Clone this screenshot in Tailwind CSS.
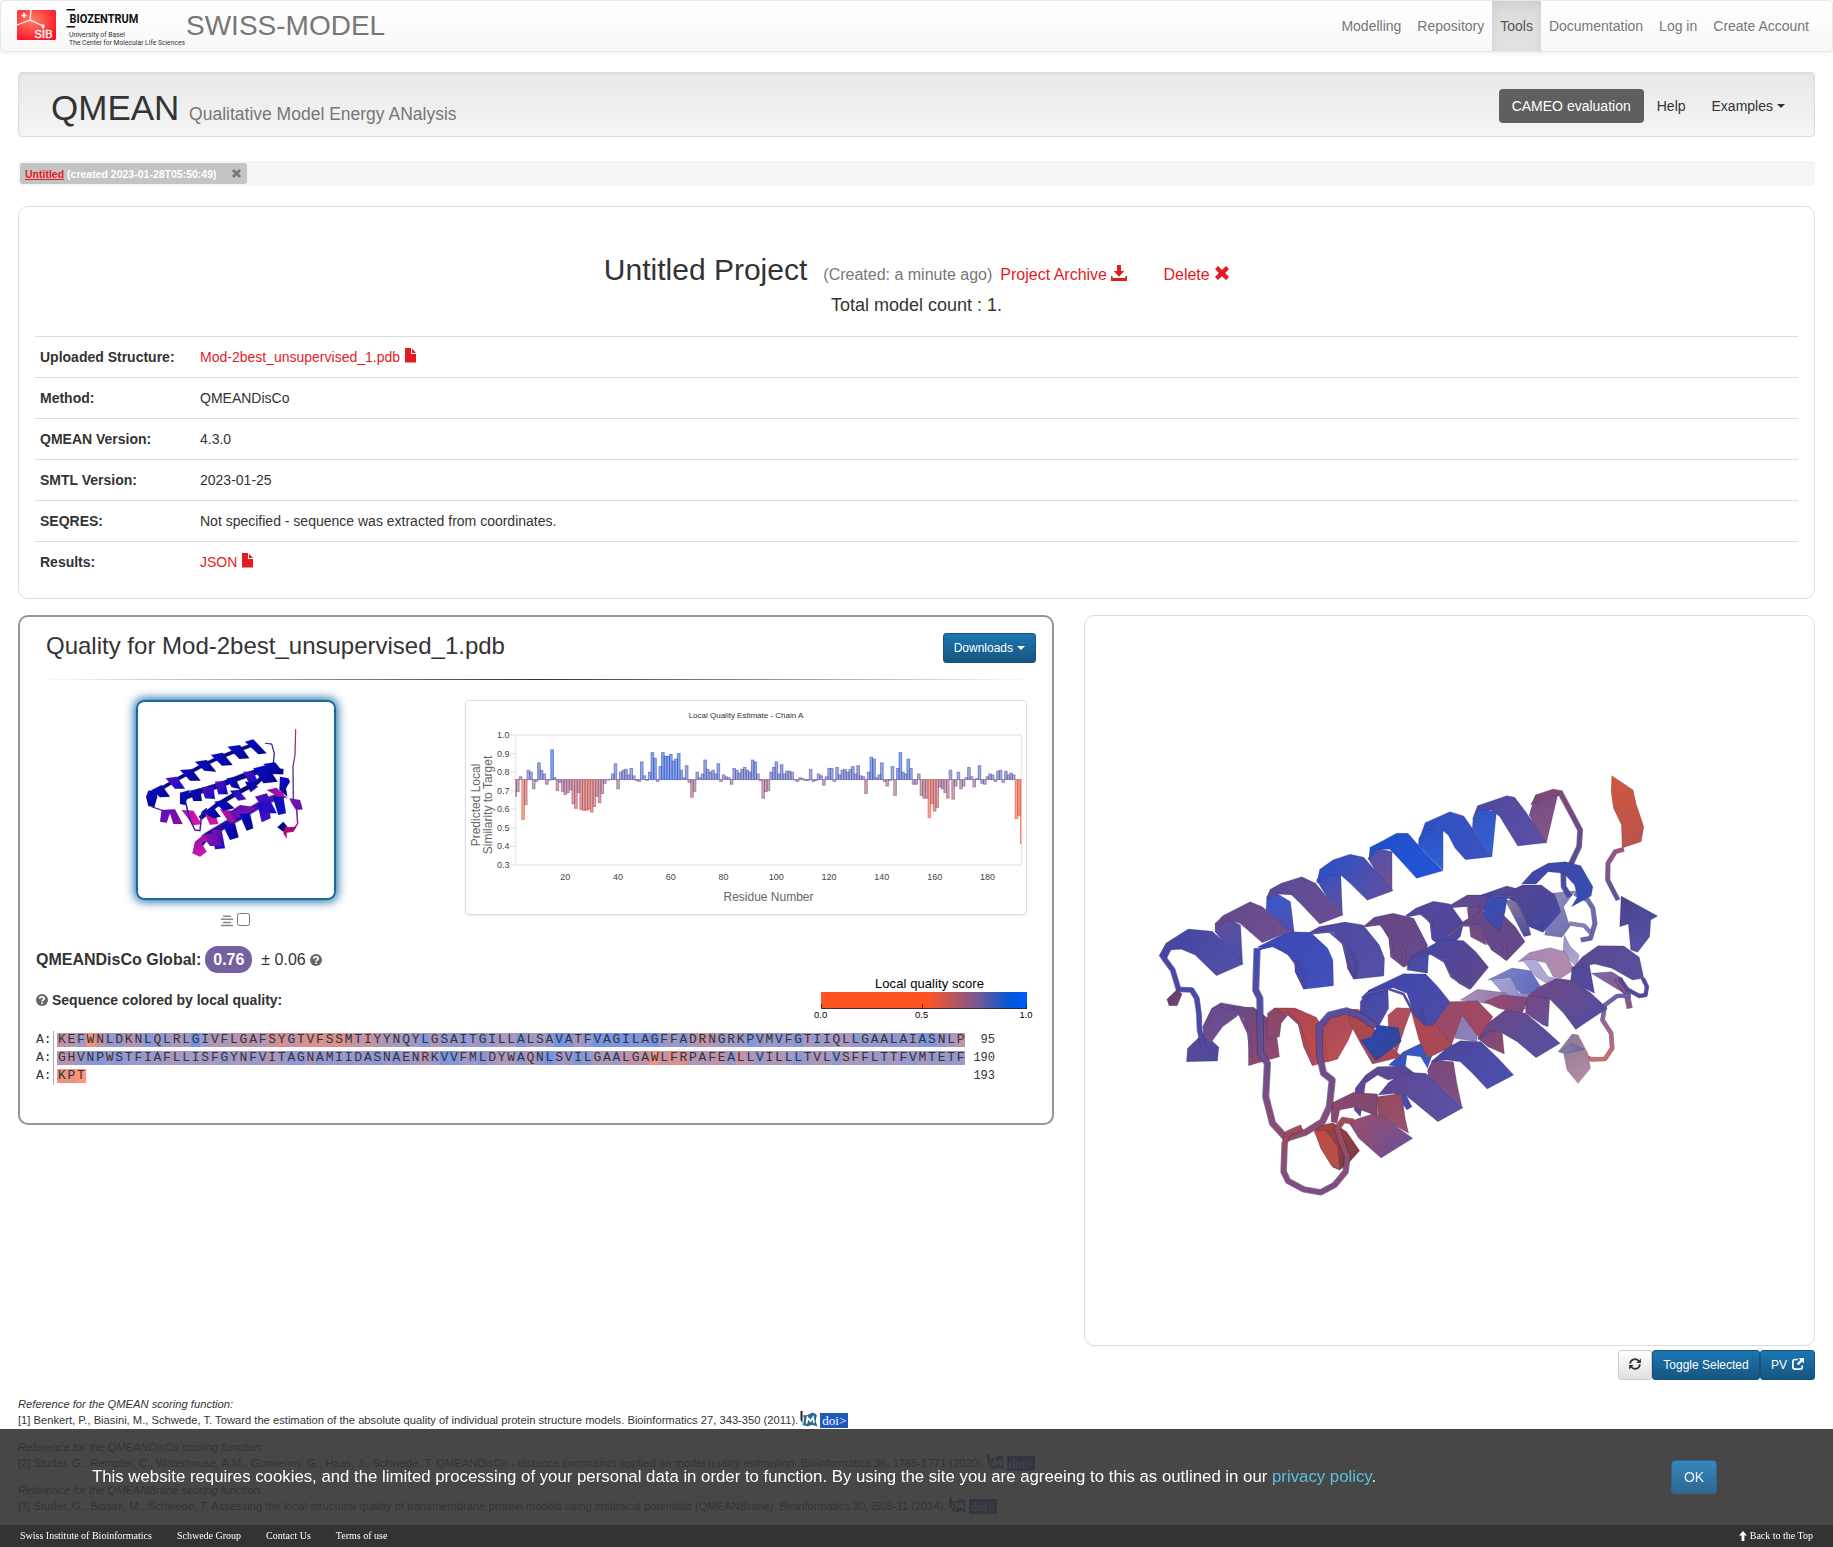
<!DOCTYPE html>
<html lang="en">
<head>
<meta charset="utf-8">
<title>QMEAN - SWISS-MODEL</title>
<script src="https://cdn.jsdelivr.net/npm/@tailwindcss/browser@4"></script>
</head>
<body class="bg-white text-[#333] text-sm leading-5 font-['Liberation_Sans',Arial,sans-serif] h-[1547px] overflow-hidden relative">

<svg class="hidden">
  <symbol id="file" viewBox="0 0 12 15"><path fill="currentColor" d="M0 0H6V6H11V14.5H0ZM7 .6 10.9 5H7Z"/></symbol>
  <symbol id="remove" viewBox="0 0 14 14"><path fill="currentColor" d="M3 0 7 4 11 0 14 3 10.2 7 14 11 11 14 7 10.2 3 14 0 11 3.8 7 0 3Z"/></symbol>
  <symbol id="download" viewBox="0 0 16 16"><path fill="currentColor" d="M6 0H10V6H13.2L8 11.8 2.8 6H6ZM0 11H1.6V13H14.4V11H16V16H0Z"/></symbol>
  <symbol id="question" viewBox="0 0 12 12"><circle cx="6" cy="6" r="6" fill="currentColor"/><path d="M3.7 4.7C3.7 2.2 8.3 2.2 8.3 4.6 8.3 6 6.1 6 6.1 7.4" fill="none" stroke="#fff" stroke-width="1.7"/><path d="M5.2 8.4H7V10H5.2Z" fill="#fff"/></symbol>
  <symbol id="align" viewBox="0 0 12 12"><path fill="currentColor" d="M2 .5H10V2H2ZM0 3.6H12V5.1H0ZM2 6.7H10V8.2H2ZM0 9.8H12V11.3H0Z"/></symbol>
  <symbol id="refresh" viewBox="0 0 12 12"><path fill="none" stroke="currentColor" stroke-width="1.7" d="M1.1 5.6C1.4 1 7.4-.3 9.8 3.2M10.9 6.4C10.6 11 4.6 12.3 2.2 8.8"/><path fill="currentColor" d="M11.9.4V5H7.3ZM.1 11.6V7H4.7Z"/></symbol>
  <symbol id="newwin" viewBox="0 0 12 12"><path fill="none" stroke="currentColor" stroke-width="1.7" d="M6 1.5H3Q.9 1.5.9 3.6V9Q.9 11.1 3 11.1H8.2Q10.3 11.1 10.3 9V7.4"/><path fill="currentColor" d="M6.6 0H12V5.4L10.1 3.5 6.6 7.2 4.8 5.4 8.5 1.9Z"/></symbol>
  <symbol id="arrowup" viewBox="0 0 8 10"><path fill="currentColor" d="M4 0 8 4.6H5.4V10H2.6V4.6H0Z"/></symbol>
  <symbol id="pubmed" viewBox="0 0 18 16"><path d="M.5 0H2.500V12L.5 9Z" fill="#222"/><path d="M3 4Q7 5 9.500 3 14 0 17 4.500 14.500 9 17.500 15.500 11 12.500 8 15.500L2.500 14Q5 9 3 4Z" fill="#2d6a94"/><path d="M6.500 12.500 7.500 6.500 10.500 10 13 6.500 14 12" fill="none" stroke="#fff" stroke-width="1.800"/></symbol>
</svg>

<nav class="flex items-start justify-between h-[52px] border border-[#e7e7e7] rounded bg-linear-to-b from-white to-[#f8f8f8] shadow-[0_1px_5px_rgba(0,0,0,0.08)] text-[#777]">
  <div class="flex items-start">
    <svg class="ml-[15px] mt-[8px]" width="41" height="32" viewBox="0 0 41 32">
      <defs><radialGradient id="sib" cx=".4" cy=".35" r=".7"><stop offset="0" stop-color="#ff8066"/><stop offset="1" stop-color="#fa1528"/></radialGradient></defs>
      <rect x="1" y="1" width="39" height="30" rx="1.5" fill="url(#sib)"/>
      <path d="M1 16 14 11 15 1M14 11 27 17V20" fill="none" stroke="#fff" stroke-width="1.2"/>
      <circle cx="27" cy="17" r="1.7" fill="#fff"/><path d="M8 4V9M5.5 6.5H10.500" stroke="#fff" stroke-width="1.7"/>
      <text x="18.500" y="28.500" font-size="11" textLength="18" stroke="#fff" stroke-width=".4" fill="#fff">SIB</text>
    </svg>
    <svg class="ml-[8px] mt-[8px]" width="122" height="38" viewBox="0 0 122 38">
      <path d="M1.500 .8H10M1.500 17.800H10" stroke="#111" stroke-width="1.500"/>
      <text x="4.500" y="14" font-family="Roboto" font-weight="700" font-size="13" textLength="69" lengthAdjust="spacingAndGlyphs" fill="#111">BIOZENTRUM</text>
      <text x="4" y="27.500" font-family="Roboto" font-size="6.500" textLength="56" lengthAdjust="spacingAndGlyphs" fill="#333">University of Basel</text>
      <text x="4" y="35.500" font-family="Roboto" font-size="6.500" textLength="116" lengthAdjust="spacingAndGlyphs" fill="#333">The Center for Molecular Life Sciences</text>
    </svg>
    <a class="text-[28px] leading-[50px] -ml-[1px]">SWISS-MODEL</a>
  </div>
  <div class="flex leading-[50px] mr-[15px]">
    <a class="px-2">Modelling</a><a class="px-2">Repository</a>
    <a class="px-2 text-[#555] bg-linear-to-b from-[#dbdbdb] to-[#e2e2e2] shadow-[inset_0_3px_9px_rgba(0,0,0,0.075)]">Tools</a>
    <a class="px-2">Documentation</a><a class="px-2">Log in</a><a class="px-2">Create Account</a>
  </div>
</nav>

<main class="px-[18px] pt-5">
  <header class="flex justify-between items-start h-[65px] border border-[#dcdcdc] rounded bg-linear-to-b from-[#e8e8e8] to-[#f5f5f5] shadow-[inset_0_1px_3px_rgba(0,0,0,0.05),0_1px_0_rgba(255,255,255,0.1)]">
    <h1 class="text-[35px] leading-10 pl-8 pt-[15px]">QMEAN <small class="text-[17.5px] text-[#777]">Qualitative Model Energy ANalysis</small></h1>
    <div class="flex mt-4 mr-4 leading-[34px]">
      <a class="px-[13px] rounded bg-[#5f5f5f] text-white">CAMEO evaluation</a><a class="px-[13px]">Help</a>
      <a class="px-[13px] flex items-center">Examples<i class="ml-1 border-x-4 border-t-4 border-x-transparent border-t-[#333]"></i></a>
    </div>
  </header>

  <div class="mt-[24px] h-[25px] rounded bg-[#f5f5f5] p-[2px] flex">
    <span class="h-[21px] rounded-[3px] bg-[#c4c4c4] pl-[5px] pr-[6px] text-[10.5px] leading-[21px] font-bold text-white flex items-center"><a class="text-[#e31b23] underline pt-px">Untitled</a><span class="ml-[3px] mr-[15px] pt-px">(created 2023-01-28T05:50:49)</span><svg class="w-[9px] h-[9px] text-[#777]"><use href="#remove"/></svg></span>
  </div>

  <section class="mt-5 h-[393px] border border-[#ddd] rounded-[10px] px-4">
    <div class="mt-[45px] h-[36px] flex justify-center items-baseline leading-9">
      <h2 class="text-[30px]">Untitled Project</h2>
      <span class="text-base text-[#777] ml-[16px]">(Created: a minute ago)</span>
      <a class="text-base text-[#e31b23] ml-[8px]">Project Archive <svg class="inline w-4 h-4 -mt-[6px]"><use href="#download"/></svg></a>
      <a class="text-base text-[#e31b23] ml-[36px]">Delete <svg class="inline w-[14px] h-[14px] -mt-[5px] ml-px"><use href="#remove"/></svg></a>
    </div>
    <p class="text-center text-[18px] leading-5 mt-[7px] h-[41px]">Total model count : 1.</p>
    <dl class="grid grid-cols-[160px_1fr] leading-5">
      <dt class="h-[41px] border-t border-[#ddd] pt-[10px] pl-[5px] font-bold">Uploaded Structure:</dt><dd class="border-t border-[#ddd] pt-[10px] pl-[5px] text-[#e31b23]">Mod-2best_unsupervised_1.pdb <svg class="inline w-[12px] h-[15px] -mt-[5px] ml-px"><use href="#file"/></svg></dd>
      <dt class="h-[41px] border-t border-[#ddd] pt-[10px] pl-[5px] font-bold">Method:</dt><dd class="border-t border-[#ddd] pt-[10px] pl-[5px]">QMEANDisCo</dd>
      <dt class="h-[41px] border-t border-[#ddd] pt-[10px] pl-[5px] font-bold">QMEAN Version:</dt><dd class="border-t border-[#ddd] pt-[10px] pl-[5px]">4.3.0</dd>
      <dt class="h-[41px] border-t border-[#ddd] pt-[10px] pl-[5px] font-bold">SMTL Version:</dt><dd class="border-t border-[#ddd] pt-[10px] pl-[5px]">2023-01-25</dd>
      <dt class="h-[41px] border-t border-[#ddd] pt-[10px] pl-[5px] font-bold">SEQRES:</dt><dd class="border-t border-[#ddd] pt-[10px] pl-[5px]">Not specified - sequence was extracted from coordinates.</dd>
      <dt class="h-[41px] border-t border-[#ddd] pt-[10px] pl-[5px] font-bold">Results:</dt><dd class="border-t border-[#ddd] pt-[10px] pl-[5px] text-[#e31b23]">JSON <svg class="inline w-[12px] h-[15px] -mt-[5px] ml-px"><use href="#file"/></svg></dd>
    </dl>
  </section>

  <div class="flex justify-between items-start mt-4">
    <section class="w-[1036px] h-[510px] border-2 border-[#959595] rounded-[10px] px-4">
      <div class="flex justify-between pt-[16px]">
        <h3 class="text-2xl leading-[26px] pl-[10px]">Quality for Mod-2best_unsupervised_1.pdb</h3>
        <button class="h-[30px] px-[10px] rounded-[3px] border border-[#15527d] bg-linear-to-b from-[#1c77b2] to-[#165580] text-white text-xs flex items-center">Downloads<i class="ml-[4px] border-x-4 border-t-4 border-x-transparent border-t-white"></i></button>
      </div>
      <div class="h-px mt-4 bg-linear-to-r from-transparent via-[#333] to-transparent"></div>
      <div class="flex mt-5">
        <div class="ml-[100px] w-[200px]">
          <div class="size-[200px] border-2 border-[#176a9f] rounded-lg shadow-[0_0_10px_2px_rgba(23,106,170,0.95)] overflow-hidden"><svg id="thumb" class="block -m-[2px]" width="200" height="200" viewBox="408 300 600 600"></svg></div>
          <div class="flex items-center mt-[11px] ml-[85px]"><svg class="w-3 h-3 text-[#888] mt-[4px]"><use href="#align"/></svg><input type="checkbox" class="size-[13px] ml-1"></div>
        </div>
        <div class="ml-[129px] w-[562px] h-[215px] border border-[#ddd] rounded shadow-[0_1px_2px_rgba(0,0,0,0.075)]"><svg id="chart" width="560" height="213" viewBox="466 701 560 213" class="block"></svg></div>
      </div>
      <div class="flex h-[27px] mt-[19px] items-center text-base"><b>QMEANDisCo Global:</b><b class="ml-[4px] w-[47px] h-[27px] leading-[27px] rounded-[13px] bg-[#7560a0] text-white text-center">0.76</b><span class="ml-[9px] mr-[4px]">± 0.06</span><svg class="w-3 h-3 text-[#666] mt-px"><use href="#question"/></svg></div>
      <div class="flex h-[53px] justify-between">
        <div class="flex items-center h-5 mt-[17px]"><svg class="w-3 h-3 text-[#666] mr-[4px]"><use href="#question"/></svg><b>Sequence colored by local quality:</b></div>
        <svg class="mr-[4px] overflow-visible" width="216" height="45" viewBox="816 974 216 45">
          <defs><linearGradient id="lg"><stop offset=".52" stop-color="#ff5422"/><stop offset=".75" stop-color="#7d5890"/><stop offset=".92" stop-color="#0056d8"/><stop offset="1" stop-color="#005aff"/></linearGradient></defs>
          <text x="875" y="989" font-size="13" textLength="109" fill="#000">Local quality score</text>
          <rect x="821" y="993" width="206" height="17" fill="url(#lg)"/><path d="M821.500 1005V1009.500H1026.500V1005M922.500 1005V1010" fill="none" stroke="#222" stroke-opacity=".8"/>
          <g font-size="9.500" text-anchor="middle" fill="#000"><text x="820.700" y="1018.500">0.0</text><text x="921.700" y="1018.500">0.5</text><text x="1026" y="1018.500">1.0</text></g>
        </svg>
      </div>
      <div id="seq" class="mt-[5px] font-['Liberation_Mono',monospace] text-[13px]"></div>
    </section>

    <aside class="w-[731px]">
      <div class="h-[731px] border border-[#ddd] rounded-[10px] pl-[55px] pt-[144px]"><svg id="viewer" width="540" height="450" viewBox="0 0 1568 1350" preserveAspectRatio="none"></svg></div>
      <div class="flex justify-end mt-1 text-xs">
        <button class="w-[34px] h-[30px] rounded-[3px] border border-[#ccc] bg-linear-to-b from-white to-[#e0e0e0] flex items-center justify-center"><svg class="w-3 h-3 -mt-[2px]"><use href="#refresh"/></svg></button>
        <button class="w-[108px] h-[30px] rounded-[3px] border border-[#15527d] bg-linear-to-b from-[#1c77b2] to-[#165580] text-white">Toggle Selected</button>
        <button class="w-[55px] h-[30px] rounded-[3px] border border-[#15527d] bg-linear-to-b from-[#1c77b2] to-[#165580] text-white flex items-center justify-center gap-[5px]">PV <svg class="w-3 h-3 -mt-[2px]"><use href="#newwin"/></svg></button>
      </div>
    </aside>
  </div>

  <div class="mt-4 text-[11.2px] leading-4">
    <p class="italic">Reference for the QMEAN scoring function:</p>
    <p class="h-4 mb-[11px] flex whitespace-pre">[1] Benkert, P., Biasini, M., Schwede, T. Toward the estimation of the absolute quality of individual protein structure models. Bioinformatics 27, 343-350 (2011). <svg class="-ml-px w-[18px] h-4 -mt-px"><use href="#pubmed"/></svg><span class="ml-[2px] mt-px h-[15px] w-[28px] text-center leading-[15px] bg-[#2058c0] text-white text-[13px] font-['Liberation_Serif',serif]">doi&gt;</span></p>
    <p class="italic">Reference for the QMEANDisCo scoring function:</p>
    <p class="h-4 mb-[11px] flex whitespace-pre">[2] Studer, G., Rempfer, C., Waterhouse, A.M., Gumienny, G., Haas, J., Schwede, T. QMEANDisCo - distance constraints applied on model quality estimation. Bioinformatics 36, 1765-1771 (2020). <svg class="-ml-px w-[18px] h-4 -mt-px"><use href="#pubmed"/></svg><span class="ml-[2px] mt-px h-[15px] w-[28px] text-center leading-[15px] bg-[#2058c0] text-white text-[13px] font-['Liberation_Serif',serif]">doi&gt;</span></p>
    <p class="italic">Reference for the QMEANBrane scoring function:</p>
    <p class="h-4 flex whitespace-pre">[3] Studer, G., Biasini, M., Schwede, T. Assessing the local structural quality of transmembrane protein models using statistical potentials (QMEANBrane). Bioinformatics 30, i505-11 (2014). <svg class="-ml-px w-[18px] h-4 -mt-px"><use href="#pubmed"/></svg><span class="ml-[2px] mt-px h-[15px] w-[28px] text-center leading-[15px] bg-[#2058c0] text-white text-[13px] font-['Liberation_Serif',serif]">doi&gt;</span></p>
  </div>
</main>

<div class="fixed inset-x-0 bottom-0">
  <div class="h-[96px] bg-[#333]/90 flex items-center justify-between pl-[92px] pr-[116px] text-[16.8px] text-white">
    <p>This website requires cookies, and the limited processing of your personal data in order to function. By using the site you are agreeing to this as outlined in our <a class="text-[#5bc0de]">privacy policy</a>.</p>
    <button class="w-[46px] h-[34px] rounded border border-[#2b6590] bg-linear-to-b from-[#3587bd] to-[#2f6890] text-sm text-white/90">OK</button>
  </div>
  <footer class="h-[22px] bg-[#333] flex items-center px-5 text-[10px] leading-[22px] text-white font-['Liberation_Serif',serif]">
    <a class="mr-[25px]">Swiss Institute of Bioinformatics</a><a class="mr-[25px]">Schwede Group</a><a class="mr-[25px]">Contact Us</a><a>Terms of use</a>
    <a class="ml-auto flex items-center gap-[3px]"><svg class="w-2 h-[10px] -mt-px"><use href="#arrowup"/></svg>Back to the Top</a>
  </footer>
</div>

<script>
// Local quality score per residue
const score = [67,69.5,77.5,54.5,62.5,81,80,71,75,85,81,79,73.5,76,92,77,70,74.5,69.5,68,69,70.5,63,60.5,69,60,59.5,59.5,60,58.5,61.5,67,63.5,68.5,74,75.8,76.2,79,84.5,71,80,81,81.5,78.5,82,78,75.5,75,85.5,78,75.5,80,90.5,87.500,75,83,90.5,88.5,88.5,89.5,86,87,90,81,77,83.5,74.5,66.5,69.5,80,77,79,86.5,81.5,80,81,79,84.5,75,78.5,77.5,77,73.5,82,81,79.5,81.5,82.5,81,80,86.5,85.5,79,75.5,66,69.5,70,80,82.5,85.5,79,84,79,80.5,80.5,80,76,75,77,76.5,75.5,75.5,81.5,75,75.5,79,78,73,77.5,82,82,75,82.5,78.5,81,81.5,80,81.5,83,79,83.5,78,77.5,68.5,80,88,87,77,78.5,85,75,72.5,75.5,83,67.5,82,90.5,80,79,87,82,73.5,73.5,79,67.5,66,66,55.5,63,59,61,72,71,69,66,81,65.5,72.5,80,71,72.5,77,82.5,77.5,72,76.5,83.5,74,73.5,77.5,79,78.5,75,80.5,81,74.5,80.5,78.5,79.5,78.5,55,56.5,41.5];
const ramp = [[52,255,84,34],[60,186,76,80],[68,146,82,122],[76,110,90,160],[92,20,82,216],[100,0,90,255]];
function color(v, a) {
  v = Math.max(52, Math.min(100, v));
  let i = 0; while (v > ramp[i + 1][0]) i++;
  const t = (v - ramp[i][0]) / (ramp[i + 1][0] - ramp[i][0]);
  const c = [1, 2, 3].map(k => Math.round(ramp[i][k] * (1 - t) + ramp[i + 1][k] * t));
  return `rgba(${c},${a})`;
}

// Chart
const X = n => 515.2 + (n - 1) * 2.638, Y = v => 735 + (100 - v) * 1.857;
let g = '<clipPath id="plot"><rect x="515" y="730" width="506.500" height="136"/></clipPath><path d="M515.500 735H1021.500V865H515.500Z" fill="none" stroke="#ececec" stroke-width="1.500"/><g clip-path="url(#plot)">';
score.forEach((v, i) => {
  const y = Math.min(Y(v), Y(76)), h = Math.max(.5, Math.abs(Y(v) - Y(76)));
  g += `<rect x="${X(i + 1) - 1.3}" y="${y}" width="2.6" height="${h}" fill="${color(v, .5)}" stroke="${color(v, .6)}" stroke-width="1"/>`;
});
g += '</g><g fill="#444" font-size="9">';
for (let k = 3; k <= 10; k++) g += `<text x="509.500" y="${Y(k * 10) + 3}" text-anchor="end">${(k / 10).toFixed(1)}</text><path d="M510 ${Y(k * 10)}H515" stroke="#ddd"/>`;
for (let k = 20; k <= 180; k += 20) g += `<text x="${X(k)}" y="880" text-anchor="middle">${k}</text>`;
g += '</g><text x="746" y="718" font-size="8" text-anchor="middle" fill="#333">Local Quality Estimate - Chain A</text><g font-size="12" fill="#666" text-anchor="middle"><text x="768.500" y="901">Residue Number</text><text transform="translate(480 805)rotate(-90)">Predicted Local</text><text transform="translate(492 805)rotate(-90)">Similarity to Target</text></g>';
document.getElementById('chart').innerHTML = g;

// Sequence
const rows = ['KEFWNLDKNLQLRLGIVFLGAFSYGTVFSSMTIYYNQYLGSAITGILLALSAVATFVAGILAGFFADRNGRKPVMVFGTIIQLLGAALAIASNLP','GHVNPWSTFIAFLLISFGYNFVITAGNAMIIDASNAENRKVVFMLDYWAQNLSVILGAALGAWLFRPAFEALLVILLLTVLVSFFLTTFVMTETF','KPT'];
let n = 0;
document.getElementById('seq').innerHTML = rows.map(r => {
  const cells = [...r].map(c => `<span class="w-[9.575px] shrink-0 text-center" style="background:${color(score[n++], .62)}">${c}</span>`).join('');
  return `<div class="flex h-[18px] leading-[14px]"><span class="w-[18px] pt-[2px] border-r border-[#aaa]">A:</span><span class="flex w-[910px] ml-[3px] h-[14px] mt-[2px]">${cells}</span><span class="w-[28px] mt-[2px] text-right text-xs leading-[14px]">${n}</span></div>`;
}).join('');

// Ribbon drawings: polygons [points, from, to]; tubes [points, from, to, width]
function paint(id, items, edge) {
  let defs = '', out = '';
  items.forEach(([p, a, b, w], i) => {
    const q = p.split(' ').map(s => s.split(',').map(Number)), xs = q.map(k => k[0]), ys = q.map(k => k[1]);
    const G = id + i;
    defs += `<linearGradient id="${G}" gradientUnits="userSpaceOnUse" x1="${Math.min(...xs)}" y1="${Math.min(...ys)}" x2="${w ? Math.min(...xs) + 1 : Math.max(...xs)}" y2="${Math.max(...ys)}"><stop stop-color="${a}"/><stop offset="1" stop-color="${b}"/></linearGradient>`;
    out += w ? `<polyline points="${p}" fill="none" stroke="#302c60" stroke-opacity="${edge * 2}" stroke-width="${w}" stroke-linejoin="round"/><polyline points="${p}" fill="none" stroke="url(#${G})" stroke-width="${w * .78}" stroke-linejoin="round"/>`
             : `<polygon points="${p}" fill="url(#${G})" stroke="#2c2860" stroke-opacity="${edge}" stroke-width="2"/>`;
  });
  document.getElementById(id).innerHTML = `<defs>${defs}</defs>${out}`;
}
paint('viewer', [
  // distant, faded parts
  ['1195,400 1265,392 1230,440 1248,500 1225,532 1175,525','#8f8cc0','#716db0'],
  ['1262,400 1300,420 1315,445 1321,490 1308,535 1280,540','#7270b0','#6462a8',15],
  ['1245,490 1290,497 1308,518','#8a84b8','#7a76b0',13],
  ['1232,525 1250,560 1275,585 1268,622 1228,580','#9a92c4','#b4abd0'],
  ['1098,605 1130,578 1190,563 1235,575 1260,630 1222,655 1200,650 1178,608 1140,600','#a48abd','#b48ba6'],
  ['1110,600 1150,598 1185,650 1210,655 1180,670 1150,650','#b4acd8','#a7a4d0'],
  ['1010,660 1080,624 1135,632 1172,695 1130,720 1095,690 1075,655','#7d86c8','#5e68ba'],
  ['1020,660 1075,658 1100,700 1140,700 1120,735 1070,720','#a8a2d4','#8c88c0'],
  ['930,720 980,688 1060,698 1120,745 1080,760 1040,735','#a892c0','#8d6896'],
  ['1310,640 1370,635 1400,655 1420,710 1390,690','#7a6aaa','#8c5582'],
  ['1385,655 1412,695 1422,745','#8a5588','#8a5588',18],
  ['1245,720 1262,705 1290,790 1265,808 1252,780','#7470b4','#39407c'],
  ['1425,706 1385,708 1350,735 1343,780 1368,820 1371,865 1350,897 1310,898 1250,868','#6462b0','#d86a66',14],
  ['1215,875 1255,822 1272,825 1300,880 1308,925 1272,970 1240,930 1230,880','#85788f','#bd8ea8'],
  ['1215,875 1255,850 1290,868 1240,880','#8882aa','#6b6a9b'],
  ['915,770 940,760 980,810 978,845 915,835','#8a7aac','#8a84b8'],
  ['722,915 765,875 820,848 850,880 835,925 815,890 775,885 770,925','#3b4cb0','#3560cc'],
  ['720,970 745,950 790,1040 775,1050','#3058cc','#4a4ca0'],
  // back half of the second helix
  ['885,445 950,405 1010,405 1060,430 990,455 945,440','#674a90','#5a4690'],
  ['990,405 1065,378 1110,390 1060,415','#4c48a0','#5a4a98'],
  ['950,445 985,440 1005,555 960,530','#704a80','#7a4d80'],
  ['1060,420 1110,420 1135,525 1115,530','#8a7a9c','#4a4898'],
  ['770,468 800,445 852,424 900,432 940,490 930,530 888,570 850,540 843,492 822,462','#544898','#4e48a2'],
  ['775,468 815,460 845,485 850,535 885,562','#5c4c98','#5048a0',8],
  ['648,500 680,472 735,460 795,475 835,555 825,595 765,622 728,590 722,535 698,495','#664888','#674888'],
  ['655,498 695,490 725,520 732,590 765,615 768,585 745,530','#6c4c90','#7a4c80',8],
  ['488,520 520,500 595,486 648,495 695,555 710,595 708,648 620,658 602,625 598,565 560,515','#4f479d','#5350a8'],
  ['492,520 550,514 590,550 605,615 625,652 630,610 600,555','#5850a4','#4a4494',8],
  ['340,562 400,530 430,515 495,517 545,565 560,600 562,677 475,688 450,635 450,600 395,560','#3d48b2','#4150bd'],
  ['345,567 385,557 430,580 452,610 455,635 477,682 480,640 455,600','#3c4cb8','#5048a0',8],
  // top helix, back turns
  ['218,490 245,470 292,495 298,612 260,570 218,515','#604e9c','#4a4caa'],
  ['368,410 390,395 437,425 448,518 425,512 366,450','#3a58cc','#4c50ac'],
  ['512,360 530,342 583,345 588,465 545,415','#3450c0','#65509c'],
  ['662,295 690,265 732,275 732,392 690,345','#5050ac','#745092'],
  ['810,235 830,205 880,205 880,330 835,285 808,255','#2750c4','#3660d6'],
  ['967,175 985,145 1035,155 1022,290 965,205','#3454c0','#3360d8'],
  ['1130,165 1148,105 1215,95 1180,250 1155,220','#704a88','#8a5688'],
  // front turns
  ['55,588 75,550 140,507 210,514 240,542 262,570 300,612 222,647 160,585 120,568 90,570 75,600','#4145a0','#544fa9'],
  ['218,492 240,467 320,425 355,440 395,475 432,515 355,548 290,490 255,480 225,500','#64488a','#704f8e'],
  ['368,412 378,388 410,370 470,350 510,370 550,420 590,465 522,492 465,430 440,405 400,402 372,420','#594a96','#6a4f90'],
  ['513,370 522,328 560,300 610,283 650,292 690,340 735,392 660,421 610,370 585,347 545,345','#2450cc','#63509c'],
  ['664,300 668,262 705,242 745,220 778,220 825,275 880,332 803,355 750,295 725,268 690,268','#1d50cc','#2454d6'],
  ['810,240 828,188 900,155 940,168 965,205 1022,290 945,299 915,265 895,225 870,205 835,208','#2f50c0','#3c52c2'],
  ['966,175 980,137 1065,107 1088,112 1120,155 1180,248 1097,258 1065,205 1045,170 1020,150 985,150','#4c48a0','#5b50a4'],
  ['1134,135 1150,104 1200,87 1225,92 1215,108 1195,107','#7a4474','#8a4b70'],
  ['1218,94 1250,155 1278,210 1275,260 1250,315 1229,335 1230,380 1248,410','#84496f','#454ba8',17],
  // red helix
  ['135,905 138,865 185,818 229,862 225,903','#5a4a94','#4c499e'],
  ['182,800 208,745 235,728 300,740 280,770 240,800 205,850 185,830','#664a90','#75508c'],
  ['265,740 330,742 378,780 398,835 405,890 315,917 315,830 300,775','#654884','#98486a'],
  ['190,800 212,752 238,737 290,765 315,820 322,890','#6c5098','#804c80',8],
  ['370,760 390,744 445,745 410,790 405,830 370,840','#98485a','#7c4a80'],
  ['390,744 450,744 512,772 528,800 575,897 500,917 475,860 460,795 430,765','#aa464e','#c04d4f'],
  ['375,760 430,762 462,790 480,860 502,908','#984c68','#c05050',8],
  ['530,800 560,760 635,765 605,840 575,895 545,905','#a8465a','#c05452'],
  ['600,748 635,748 672,800 755,885 755,892 675,912 640,850 612,795','#a84a4c','#a84754'],
  ['720,765 745,743 790,745 770,800 745,880 722,830','#b34f55','#a05068'],
  ['785,745 835,755 870,790 908,858 835,895 810,840','#ad4850','#a84a58'],
  ['835,760 900,725 980,722 1025,770 985,835 935,765 905,855','#924a70','#a84858'],
  ['1000,725 1050,705 1130,712 1110,760 1040,745','#984868','#7c4c80'],
  // inner helix
  ['638,780 640,725 665,690 720,690 722,745 690,805','#4046a6','#5550a4'],
  ['640,725 665,690 765,641 830,642 865,680 900,725 850,797 825,795 790,745 775,700 735,683 690,690 655,705','#3c46a8','#4c4caa'],
  ['645,715 660,700 720,686 765,702 795,760 828,792 815,745','#5452a8','#4448a0',8],
  ['775,630 785,600 838,580 835,640','#4848a0','#4e4ca8'],
  ['775,625 785,592 830,565 880,537 940,542 975,575 1012,622 960,688 925,670 895,630 885,600 840,580 805,588','#4048aa','#624688'],
  ['782,618 805,588 845,580 885,605 905,650 955,684 945,640 915,605','#4c4ca8','#664c90',8],
  ['890,525 930,490 990,453 1050,460 1090,500 1118,545 1065,602 1020,570 1000,525 985,497 940,492','#644888','#644888'],
  ['895,528 935,495 985,497 1010,550 1062,597 1060,560','#6c5090','#6c5090',8],
  ['1000,440 1015,405 1068,405 1060,455 1045,515 1000,470','#3050b8','#4848a4'],
  ['1050,405 1110,375 1165,375 1205,405 1222,455 1170,517 1130,500 1098,430','#55468f','#4548a4'],
  ['1005,435 1030,408 1090,412 1110,450 1135,495 1170,512 1165,480','#5450a4','#4048a0',8],
  ['1108,372 1140,335 1185,310 1235,305 1280,317 1315,380 1310,408 1253,440 1270,410 1262,375 1230,340 1185,335 1150,372','#4347a4','#354cb4'],
  // lower helix
  ['622,1050 625,985 655,945 690,920 770,918 800,942 720,960 690,945 655,970 640,1070','#624890','#504898'],
  ['555,1030 620,997 690,1002 688,1068 620,1042 580,1050 572,1090 555,1085','#8b4a6c','#7c4870'],
  ['505,1100 560,1088 600,1115 638,1172 605,1210 580,1230 560,1222 525,1165','#a5443e','#793848'],
  ['505,1112 540,1112 575,1160 580,1230 555,1215 525,1165','#bc4a44','#b5504c'],
  ['688,1010 760,1000 770,1075 780,1120 690,1068','#92495f','#9a526e'],
  ['605,1085 675,1062 700,1068 745,1100 792,1135 700,1194 635,1135','#9c4d68','#68509c'],
  ['835,930 850,900 910,905 920,970 935,1040 880,985 838,955','#78487c','#864e80'],
  ['692,1005 720,970 770,937 830,940 885,990 938,1043 865,1085 800,1030 770,1005 745,1000','#604590','#5754a8'],
  ['980,835 1010,800 1052,818 1058,882 1010,860','#75488a','#904a68'],
  ['845,905 890,865 930,842 990,845 1040,895 1085,945 1008,987 965,940 930,905 890,900','#4b459c','#4c50b0'],
  ['1120,730 1130,705 1190,710 1185,800 1170,795 1120,760','#744884','#69509a'],
  ['982,840 1010,790 1060,750 1120,760 1175,808 1220,850 1150,893 1095,845 1045,815 1015,815','#6c4780','#5350a4'],
  ['1250,665 1255,620 1305,615 1320,700 1300,690','#534998','#534aa0'],
  ['1125,708 1160,680 1210,655 1260,662 1310,700 1357,745 1265,808 1230,760 1190,718 1150,710','#704a82','#544ba0'],
  ['1252,630 1285,590 1330,557 1405,558 1450,592 1463,655 1430,660 1370,625 1320,612 1280,620','#5e4790','#56509e'],
  ['1393,655 1415,688 1450,708 1468,705 1472,680 1460,655','#5048a0','#5048a0',13],
  // terminal strand
  ['1397,408 1503,468 1483,480 1480,530 1445,577 1425,570 1418,492 1393,500','#46438a','#5954ac'],
  ['1405,268 1380,275 1359,310 1358,360 1388,420','#a05678','#5952a8',15],
  ['1370,47 1432,90 1440,130 1463,200 1455,245 1400,264 1398,195 1375,145 1368,95','#d0583b','#b85250'],
  // loops in front
  ['65,588 95,630 112,688 150,690 165,715 171,760 173,810 185,865','#4747a6','#4c4ca8',17],
  ['78,718 108,688 122,702 108,737 84,737','#5a3e6c','#7a4468'],
  ['340,565 336,690 348,715 350,880 370,910 365,1010 385,1090 425,1135 480,1117 530,1085 550,1040 558,960 533,940 522,890 520,800 550,765 600,752 640,768 685,800','#3b4db8','#8f4d6e',21],
  ['690,795 750,803 758,845 685,902 640,840 672,832','#2748b8','#36458f'],
  ['470,1102 430,1120 420,1150 417,1235 430,1263 475,1288 525,1297 565,1275 597,1235 602,1190 585,1145 573,1105 590,1080 620,1085','#a74a52','#7d4c86',19]
], .3);

const B = '#0b0bd0', D = '#06068a', P = '#5a10b8', M = '#c010a8', V = '#8a10a8';
paint('thumb', [
  ['445,590 468,575 510,550 560,522 610,495 660,472 710,452 765,432',D,D,13],
  ['545,595 600,574 660,555 720,532 780,512 850,515',D,D,20],
  ['600,655 650,615 710,580 770,548 815,505',D,D,16],
  ['590,745 620,708 680,672 740,638 800,602 850,585',P,D,24],
  ['438,590 445,572 468,570 472,590 463,622 445,618',B,D],
  ['455,570 485,555 510,590 480,592',B,D],['497,535 530,530 555,566 525,566',P,B],['540,510 575,508 602,542 570,542',B,D],
  ['585,485 620,480 649,515 613,512',B,D],['633,465 668,458 698,495 666,497',B,D],['683,440 720,435 748,475 718,477',B,D],['735,425 760,418 800,460 775,463',B,D],
  ['795,430 815,432 823,460 820,490',P,D,4],
  ['540,578 570,570 555,615 540,612',B,D],['570,572 600,565 606,603 580,603',B,D],['605,562 640,560 645,597 615,595',P,B],['645,545 675,543 684,583 655,583',P,B],
  ['680,535 705,532 722,568 695,562',B,D],['730,515 760,515 775,548 745,545',P,B],['760,505 800,495 833,545 790,550',B,D],['790,492 825,487 846,512 825,520',B,D],
  ['455,620 490,632',P,P,4],['480,665 485,630 525,628 548,672 520,672 510,640 500,668',P,V],['545,630 580,632 605,672 580,676','#b010a0','#e018b0'],
  ['612,635 645,638 655,672 630,674','#c018a0','#d018a0'],['660,628 695,632 710,665 688,668',M,V],
  ['555,600 570,660 585,690 600,692 605,640 620,625',B,P,5],
  ['604,635 640,622 662,650 640,655',B,D],['643,605 675,600 704,625 670,632',B,D],['690,572 715,570 739,598 715,602',B,P],['735,545 755,545 774,560 752,577',D,B],
  ['690,635 720,615 770,622 735,650 700,655',P,V],['765,590 800,580 830,640 800,640',P,B],['800,570 830,563 862,595 835,590',V,M],
  ['818,590 850,590 858,640 835,645','#1010b0',B],['772,610 805,605 812,655 785,667',B,P],['718,642 750,640 760,685 740,692',B,D],['668,675 705,670 716,712 690,720',B,D],['635,690 665,690 675,745 645,748',V,B],['605,705 645,698 668,738 630,738',V,P],
  ['577,760 585,725 610,705 625,720 605,730 620,755 600,770',V,'#e018b0'],
  ['840,530 865,535 870,545 858,565 862,590 838,570',B,D],['868,595 900,600 908,628 888,630 875,610',V,P],
  ['887,388 885,465 879,500 880,600','#c02050','#2018b0',4],
  ['890,630 893,670 880,690',P,M,5],['832,682 850,665 862,680 850,695',D,D],['855,682 890,680 880,695 860,698 860,716 850,700','#c00870','#901080']
], .15);
</script>
</body>
</html>
